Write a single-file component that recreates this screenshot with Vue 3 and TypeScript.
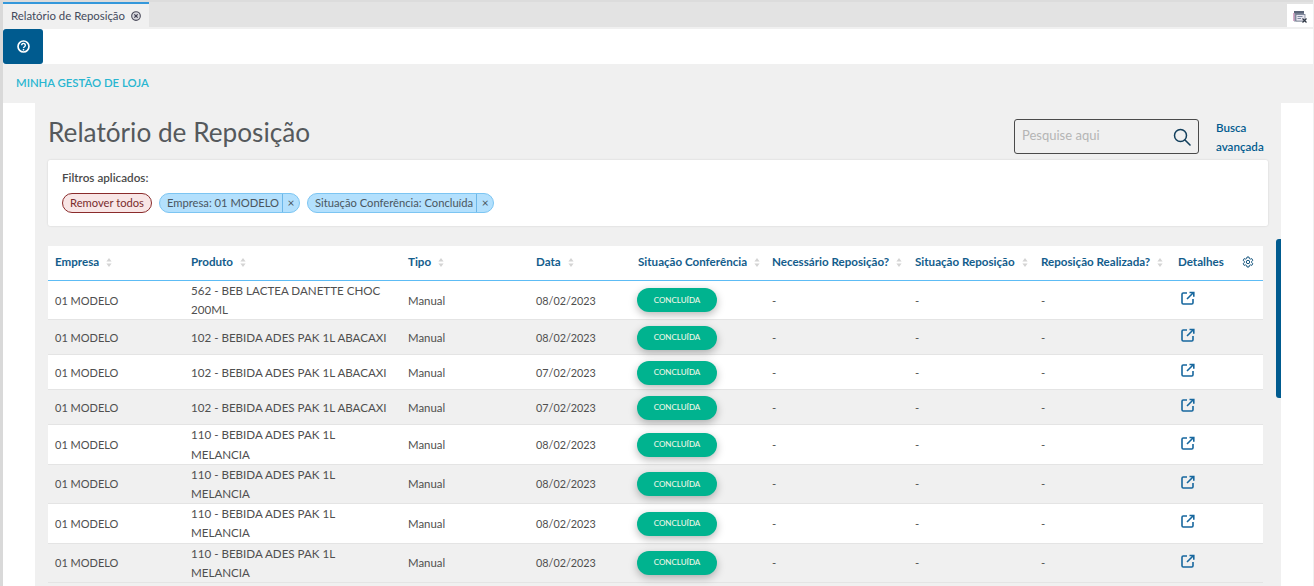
<script setup lang="ts">
interface Row {
  produto: string
  data: string
}
const columns = [
  { label: 'Empresa', sort: true },
  { label: 'Produto', sort: true },
  { label: 'Tipo', sort: true },
  { label: 'Data', sort: true },
  { label: 'Situação Conferência', sort: true },
  { label: 'Necessário Reposição?', sort: true },
  { label: 'Situação Reposição', sort: true },
  { label: 'Reposição Realizada?', sort: true },
  { label: 'Detalhes', sort: false },
]
const melancia = '110 - BEBIDA ADES PAK 1L\nMELANCIA'
const abacaxi = '102 - BEBIDA ADES PAK 1L ABACAXI'
const rows: Row[] = [
  { produto: '562 - BEB LACTEA DANETTE CHOC\n200ML', data: '08/02/2023' },
  { produto: abacaxi, data: '08/02/2023' },
  { produto: abacaxi, data: '07/02/2023' },
  { produto: abacaxi, data: '07/02/2023' },
  { produto: melancia, data: '08/02/2023' },
  { produto: melancia, data: '08/02/2023' },
  { produto: melancia, data: '08/02/2023' },
  { produto: melancia, data: '08/02/2023' },
]
</script>

<template>
  <div class="app">
    <div class="tabbar">
      <div class="tab">
        <span>Relatório de Reposição</span>
        <svg class="tab-close" viewBox="0 0 12 12" width="10" height="10">
          <circle cx="6" cy="6" r="5.200" fill="#d8d8de" stroke="#4a4a5a" stroke-width="1.300" />
          <path d="M4 4l4 4M8 4l-4 4" stroke="#3f3f50" stroke-width="1.500" />
        </svg>
      </div>
      <div class="tab-tool">
        <svg viewBox="0 0 14 13" width="14" height="13">
          <rect x="1" y="1" width="10" height="10.500" fill="#8b94a6" />
          <rect x="1" y="1" width="10" height="2.500" fill="#5b6478" />
          <rect x="0" y="3" width="1.500" height="8" fill="#d9a8c8" />
          <rect x="3" y="4.500" width="9" height="6.500" fill="#e8e6f0" stroke="#6b7488" stroke-width=".7" />
          <path d="M4.500 6.500h5M4.500 8.500h3.500" stroke="#7d8aa0" stroke-width="1" />
          <path d="M9.500 8.500l4 4M13.500 8.500l-4 4" stroke="#2f3744" stroke-width="1.200" />
        </svg>
      </div>
    </div>
    <div class="toolbar">
      <button class="help" type="button" aria-label="Ajuda">
        <svg viewBox="0 0 14 14" width="13" height="13">
          <circle cx="7" cy="7" r="5.900" fill="none" stroke="#fff" stroke-width="1.800" />
          <path d="M5 5.700a2 2 0 1 1 3.100 1.600c-.7.5-1.100.8-1.100 1.400" fill="none" stroke="#fff" stroke-width="1.500" />
          <circle cx="7" cy="10.400" r=".9" fill="#fff" />
        </svg>
      </button>
    </div>
    <div class="crumb">MINHA GESTÃO DE LOJA</div>
    <div class="frame">
      <main class="content">
        <div class="head">
          <h1>Relatório de Reposição</h1>
          <div class="search">
            <span class="placeholder">Pesquise aqui</span>
            <svg viewBox="0 0 18 18" width="18" height="18">
              <circle cx="7.500" cy="7.500" r="6" fill="none" stroke="#123f5c" stroke-width="1.500" />
              <path d="M12 12l5 5" stroke="#123f5c" stroke-width="1.600" stroke-linecap="round" />
            </svg>
          </div>
          <a class="advanced">Busca<br />avançada</a>
        </div>
        <section class="filters">
          <div class="filters-title">Filtros aplicados:</div>
          <div class="chips">
            <span class="remove">Remover todos</span>
            <span class="chip"><span class="chip-text">Empresa: 01 MODELO</span><span class="chip-x">×</span></span>
            <span class="chip"><span class="chip-text">Situação Conferência: Concluída</span><span class="chip-x">×</span></span>
          </div>
        </section>
        <section class="table">
          <div class="tr th">
            <div v-for="c in columns" :key="c.label" class="cell">
              <span>{{ c.label }}</span>
              <svg v-if="c.sort" class="sort" viewBox="0 0 6 9" width="6" height="9">
                <path d="M3 0l2.600 3.400H.4zM3 9L.4 5.600h5.200z" fill="#d4d4d4" />
              </svg>
            </div>
            <div class="cell">
              <svg viewBox="0 0 24 24" width="12" height="12">
                <path d="M10 2h4l.6 3 2.100 1.200 2.900-1 2 3.500-2.300 2v2.600l2.300 2-2 3.500-2.900-1-2.100 1.200-.6 3h-4l-.6-3-2.100-1.200-2.900 1-2-3.500 2.300-2v-2.600l-2.300-2 2-3.500 2.900 1L9.400 5z" fill="none" stroke="#17567f" stroke-width="2" stroke-linejoin="round" />
                <circle cx="12" cy="12" r="3.400" fill="none" stroke="#17567f" stroke-width="2" />
              </svg>
            </div>
          </div>
          <div v-for="(r, i) in rows" :key="i" class="tr" :class="{ odd: i % 2 === 1 }">
            <div class="cell narrow">01 MODELO</div>
            <div class="cell produto">{{ r.produto }}</div>
            <div class="cell">Manual</div>
            <div class="cell date">{{ r.data }}</div>
            <div class="cell"><span class="badge">CONCLUÍDA</span></div>
            <div class="cell">-</div>
            <div class="cell">-</div>
            <div class="cell">-</div>
            <div class="cell">
              <svg class="ext" viewBox="0 0 14 14" width="14" height="14">
                <path d="M6 2H2.200A1.200 1.200 0 0 0 1 3.200v8.600A1.200 1.200 0 0 0 2.200 13h8.600a1.200 1.200 0 0 0 1.200-1.200V8" fill="none" stroke="#17679e" stroke-width="1.600" />
                <path d="M6 8l6-6M8.500 1.500h4.300v4.300" fill="none" stroke="#17679e" stroke-width="1.600" />
              </svg>
            </div>
            <div class="cell"></div>
          </div>
        </section>
        <div class="scrollbar"></div>
      </main>
    </div>
  </div>
</template>

<style>
html, body { margin: 0; padding: 0; overflow: hidden; background: #fff; }
</style>

<style scoped>
.app {
  height: 586px;
  overflow: hidden;
  font-family: Lato, "Open Sans", sans-serif;
  color: #4a4a4a;
  background: #fff;
  border-left: 3px solid #d9d9d9;
  border-right: 1px solid #f0f0f0;
  box-sizing: border-box;
}
.tabbar {
  height: 27px;
  background: #e3e3e3;
  border-top: 2px solid #dcdcdc;
  box-sizing: border-box;
  display: flex;
  justify-content: space-between;
  align-items: flex-end;
}
.tab {
  height: 25px;
  width: 146px;
  box-sizing: border-box;
  border-top: 2px solid #3498db;
  background: #f0f0f0;
  padding-left: 8px;
  display: flex;
  align-items: center;
  gap: 6px;
  font-size: 11.400px;
  color: #444a5c;
  white-space: nowrap;
}
.tab-tool {
  width: 26px;
  height: 23px;
  padding-top: 1px;
  box-sizing: border-box;
  background: #fff;
  display: flex;
  align-items: center;
  justify-content: center;
}
.toolbar {
  height: 37px;
  border-top: 2px solid #f0f0f0;
  box-sizing: border-box;
  background: #fff;
}
.help {
  width: 40px;
  height: 35px;
  border: 0;
  padding: 0;
  border-radius: 3px;
  background: #005b8f;
  display: flex;
  align-items: center;
  justify-content: center;
}
.crumb {
  height: 39px;
  background: #f0f0f0;
  padding: 12px 0 0 13px;
  box-sizing: border-box;
  font-size: 11.350px;
  font-weight: 600;
  color: #29b6d0;
}
.frame {
  padding: 0 32px;
  background: #fff;
}
.content {
  position: relative;
  background: #f0f0f0;
  padding: 0 13px;
  height: 483px;
  overflow: hidden;
}
.head {
  height: 57px;
  display: flex;
  align-items: flex-start;
}
h1 {
  margin: 12px 0 0;
  flex: 1;
  font-size: 26.200px;
  line-height: 34px;
  font-weight: 400;
  color: #55595c;
}
.search {
  margin-top: 16px;
  width: 185px;
  height: 35px;
  box-sizing: border-box;
  border: 1px solid #4a4a4a;
  border-radius: 3px;
  display: flex;
  align-items: center;
  justify-content: space-between;
  padding: 0 7px;
  font-size: 13px;
}
.placeholder { color: #b5b5b5; margin-top: -4px; }
.advanced {
  margin: 15px 3px 0 17px;
  width: 49px;
  font-size: 11.600px;
  font-weight: 600;
  line-height: 19px;
  color: #005b8f;
}
.filters {
  width: 1220px;
  height: 66px;
  box-sizing: border-box;
  background: #fff;
  border-radius: 2px;
  box-shadow: 0 0 2px rgba(0, 0, 0, .15);
  padding: 10px 14px;
}
.filters-title {
  font-size: 11.700px;
  font-weight: 600;
  color: #4a4a4a;
  line-height: 14px;
}
.chips {
  margin-top: 9px;
  display: flex;
  gap: 7px;
  font-size: 11.200px;
}
.remove, .chip {
  height: 20px;
  box-sizing: border-box;
  border-radius: 10px;
  display: flex;
  align-items: center;
  white-space: nowrap;
  padding-bottom: 1px;
}
.remove {
  width: 90px;
  justify-content: center;
  background: #f8e6e6;
  border: 1px solid #8a2b2b;
  color: #7a2d2d;
}
.chip {
  background: #b3e0fd;
  border: 1px solid #7cc5f2;
  color: #4a5660;
  padding-bottom: 0;
}
.chip-text { padding: 0 3px 1px 7px; }
.chip-x {
  width: 16px;
  height: 18px;
  border-left: 1px solid #6db7e8;
  text-align: center;
  line-height: 18px;
  font-size: 12px;
}
.table {
  margin-top: 20px;
  width: 1215px;
  background: #fff;
}
.tr {
  display: grid;
  grid-template-columns: 136px 217px 128px 102px 134px 143px 126px 137px 64px 28px;
  min-height: 35px;
  border-bottom: 1px solid #e4e4e4;
  box-sizing: border-box;
  background: #fff;
  font-size: 11.400px;
  line-height: 19.200px;
  color: #4f4f4f;
}
.tr.odd { background: #f0f0f0; }
.tr.th {
  height: 35px;
  border-bottom: 1px solid #5dbcf5;
  font-size: 11.600px;
  font-weight: 700;
  color: #135d8c;
}
.cell {
  padding: 0 7px;
  display: flex;
  align-items: center;
  min-width: 0;
}
.th .cell { white-space: nowrap; padding-bottom: 2px; }
.narrow { font-size: 11px; }
.date { font-size: 10.800px; }
.produto { white-space: pre-line; padding-right: 0; font-size: 11.600px; }
.sort { margin-left: 7px; flex: none; }
.badge {
  width: 80px;
  height: 24px;
  margin: .4px 0 0 -1px;
  border-radius: 12px;
  background: #00b38f;
  color: #f2f7e8;
  font-size: 8px;
  font-weight: 500;
  display: flex;
  align-items: center;
  justify-content: center;
  box-shadow: 0 3px 8px rgba(0, 0, 0, .28);
}
.ext { margin: -4px 0 0 3px; }
.scrollbar {
  position: absolute;
  right: 0;
  top: 136px;
  width: 5px;
  height: 159px;
  border-radius: 3px 0 0 3px;
  background: #005b8f;
}
</style>
